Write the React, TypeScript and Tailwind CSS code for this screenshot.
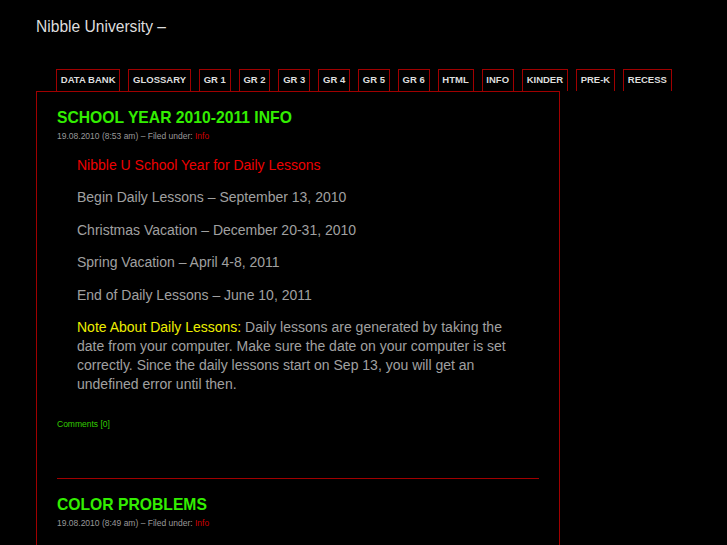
import React from 'react'

const tabs = ['DATA BANK', 'GLOSSARY', 'GR 1', 'GR 2', 'GR 3', 'GR 4', 'GR 5', 'GR 6', 'HTML', 'INFO', 'KINDER', 'PRE-K', 'RECESS']

const Meta: React.FC<{ time: string }> = ({ time }) => (
  <div className="mt-[4px] text-[8.5px] leading-[11px] text-[#999]">
    19.08.2010 ({time}) – Filed under: <a className="text-[#cc0000]">Info</a>
  </div>
)

const App: React.FC = () => {
  return (
    <div className="min-h-screen bg-black font-['Liberation_Sans',Arial,sans-serif] overflow-hidden">
      <div className="pl-9 pt-[17px]">
        <h1 className="text-[15.6px] leading-[19px] text-[#ddd]">Nibble University –</h1>
      </div>

      <nav className="flex gap-2 pl-[56px] mt-[33px]">
        {tabs.map((t) => (
          <div
            key={t}
            className="h-[22px] border border-b-0 border-[#a00000] px-[3.8px] flex items-center text-[9.5px] font-bold text-[#ddd]"
          >
            {t}
          </div>
        ))}
      </nav>

      <div className="ml-9 w-[524px] border border-b-0 border-[#a00000] px-5 pt-[16px] pb-10">
        <h2 className="text-[15.7px] leading-[19px] font-bold text-[#33ee00]">SCHOOL YEAR 2010-2011 INFO</h2>
        <Meta time="8:53 am" />

        <div className="px-5 mt-[14px] text-[14px] leading-[19px] text-[#a0a0a0]">
          <p className="mb-[13.4px] text-[#ee0000]">Nibble U School Year for Daily Lessons</p>
          <p className="mb-[13.4px]">Begin Daily Lessons – September 13, 2010</p>
          <p className="mb-[13.4px]">Christmas Vacation – December 20-31, 2010</p>
          <p className="mb-[13.4px]">Spring Vacation – April 4-8, 2011</p>
          <p className="mb-[13.4px]">End of Daily Lessons – June 10, 2011</p>
          <p>
            <span className="text-[#eeee00]">Note About Daily Lessons:</span> Daily lessons are generated by taking the
            date from your computer. Make sure the date on your computer is set correctly. Since the daily lessons start
            on Sep 13, you will get an undefined error until then.
          </p>
        </div>

        <div className="mt-[25px] text-[8.5px] leading-[11px] text-[#33cc00]">Comments [0]</div>

        <div className="mt-[48px] border-t border-[#a00000]"></div>

        <h2 className="mt-[16px] text-[15.7px] leading-[19px] font-bold text-[#33ee00]">COLOR PROBLEMS</h2>
        <Meta time="8:49 am" />
      </div>
    </div>
  )
}

export default App
